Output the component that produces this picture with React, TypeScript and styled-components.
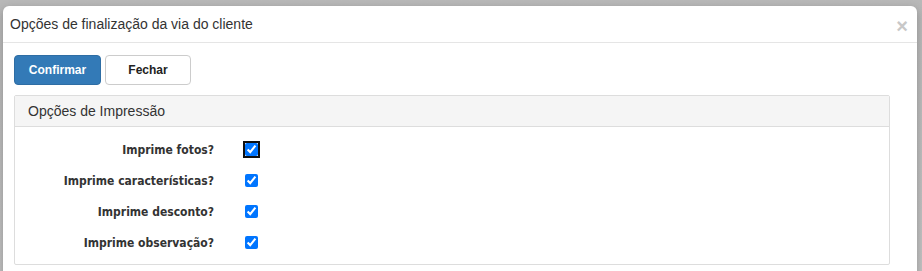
import React from "react";
import styled, { createGlobalStyle } from "styled-components";

const Global = createGlobalStyle`
  html, body { margin: 0; padding: 0; }
  body {
    background: #bcbcbc;
    font-family: "Liberation Sans", Arial, sans-serif;
    overflow: hidden;
  }
`;

const Backdrop = styled.div`
  height: 271px;
  padding: 6px 5px 0 3px;
  box-sizing: border-box;
  background: linear-gradient(#b8b8b8, #c2c2c2);
`;

const Modal = styled.div`
  background: #fff;
  border-radius: 6px 6px 0 0;
  box-shadow: 0 3px 9px rgba(0, 0, 0, 0.25);
  height: 270px;
  display: flex;
  flex-direction: column;
`;

const Header = styled.div`
  display: flex;
  align-items: center;
  justify-content: space-between;
  height: 36px;
  padding: 0 9px 0 7px;
  border-bottom: 1px solid #e5e5e5;
`;

const Title = styled.h4`
  margin: 0;
  font-size: 14px;
  font-weight: normal;
  color: #333;
`;

const Close = styled.span`
  font-size: 20px;
  font-weight: bold;
  color: #c8c8c8;
  line-height: 1;
  margin-top: 4px;
`;

const Body = styled.div`
  padding: 12px 27px 0 11px;
  display: flex;
  flex-direction: column;
  gap: 10px;
`;

const Toolbar = styled.div`
  display: flex;
  gap: 4px;
`;

const Button = styled.button<{ $primary?: boolean }>`
  height: 30px;
  width: ${(p) => (p.$primary ? "87px" : "86px")};
  border-radius: 4px;
  font-family: "Liberation Sans", Arial, sans-serif;
  font-size: 12px;
  font-weight: bold;
  cursor: pointer;
  background: ${(p) => (p.$primary ? "#337ab7" : "#fff")};
  color: ${(p) => (p.$primary ? "#fff" : "#222")};
  border: 1px solid ${(p) => (p.$primary ? "#2e6da4" : "#ccc")};
`;

const Panel = styled.div`
  border: 1px solid #ddd;
  border-radius: 2px;
`;

const PanelHeading = styled.div`
  background: #f5f5f5;
  border-bottom: 1px solid #ddd;
  height: 30px;
  display: flex;
  align-items: center;
  padding-left: 13px;
  font-size: 14px;
  color: #333;
`;

const PanelBody = styled.div`
  padding: 7px 0 6px;
  display: flex;
  flex-direction: column;
`;

const Row = styled.label`
  display: grid;
  grid-template-columns: 199px 1fr;
  column-gap: 31px;
  align-items: center;
  height: 31px;
`;

const Label = styled.span`
  text-align: right;
  font-family: "DejaVu Sans Condensed", "DejaVu Sans", Verdana, sans-serif;
  font-stretch: condensed;
  font-size: 12px;
  font-weight: bold;
  color: #333;
`;

const Check = styled.input<{ $focused?: boolean }>`
  margin: 0;
  width: 13px;
  height: 13px;
  accent-color: #0075ff;
  outline: ${(p) => (p.$focused ? "2px solid #101010" : "none")};
  outline-offset: 0;
  border-radius: 2px;
`;

const options = [
  "Imprime fotos?",
  "Imprime características?",
  "Imprime desconto?",
  "Imprime observação?",
];

export default function App() {
  return (
    <>
      <Global />
      <Backdrop>
        <Modal>
          <Header>
            <Title>Opções de finalização da via do cliente</Title>
            <Close>×</Close>
          </Header>
          <Body>
            <Toolbar>
              <Button $primary>Confirmar</Button>
              <Button>Fechar</Button>
            </Toolbar>
            <Panel>
              <PanelHeading>Opções de Impressão</PanelHeading>
              <PanelBody>
                {options.map((o, i) => (
                  <Row key={o}>
                    <Label>{o}</Label>
                    <Check type="checkbox" defaultChecked $focused={i === 0} />
                  </Row>
                ))}
              </PanelBody>
            </Panel>
          </Body>
        </Modal>
      </Backdrop>
    </>
  );
}
